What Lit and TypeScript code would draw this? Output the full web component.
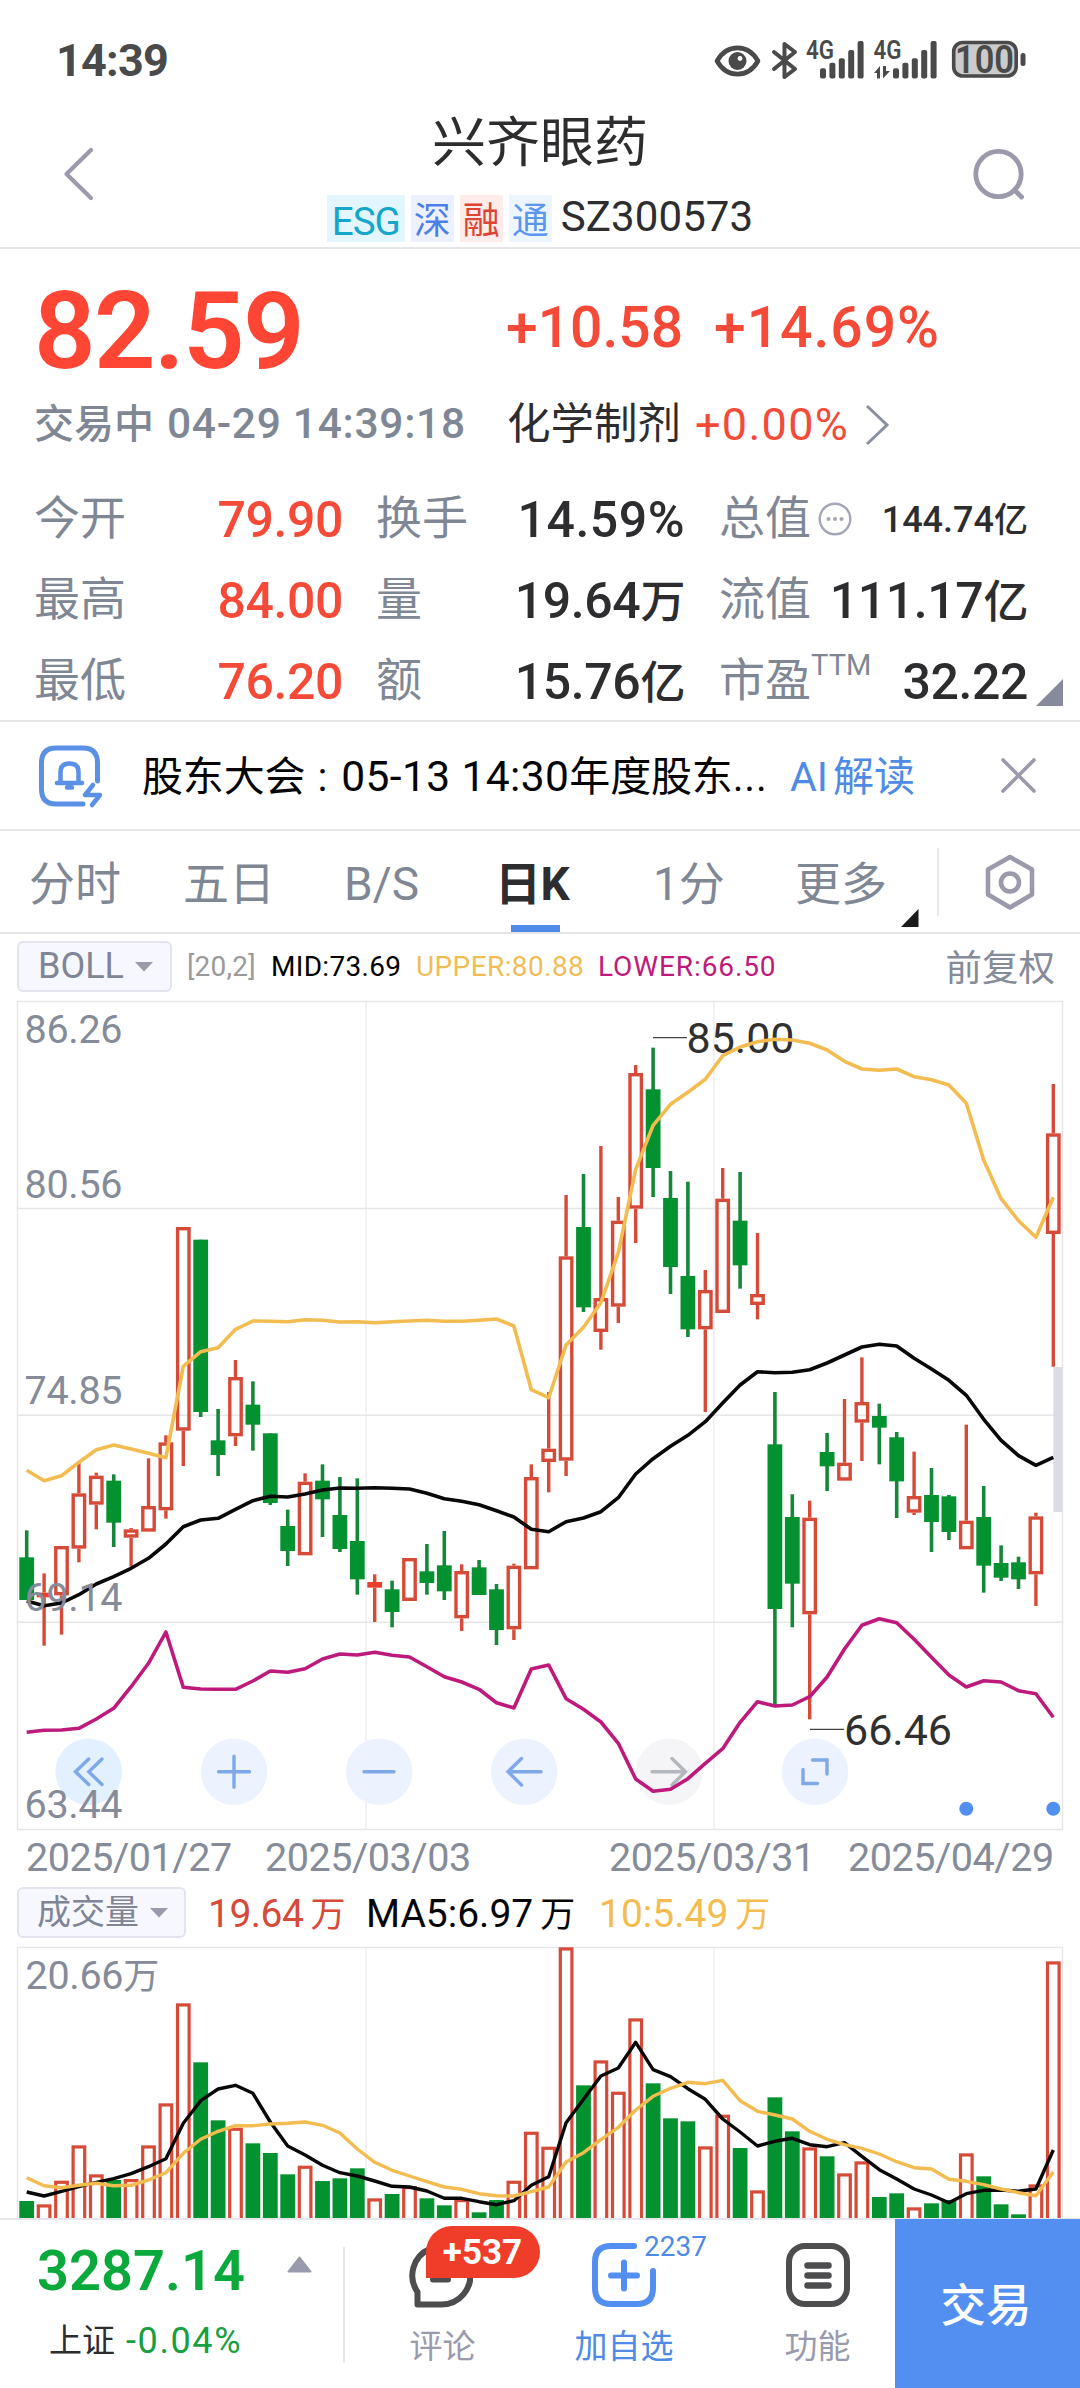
import { LitElement, html, svg, css } from "lit";
import { customElement } from "lit/decorators.js";

type Candle = [up: number, high: number, top: number, bottom: number, low: number];

const STEP = 17.4;
const FIRST_X = 26.7;
const xAt = (i: number) => FIRST_X + STEP * i;

/* Candle and band values are stored in thirds of a pixel below the top of the plot area. */
const CANDLES: Candle[] = [
  [0, 1591, 1672, 1800, 1800], [1, 1720, 1778, 1792, 1937], [1, 1638, 1638, 1786, 1904], [1, 1388, 1480, 1646, 1687],
  [1, 1418, 1427, 1514, 1588], [0, 1423, 1442, 1568, 1641], [1, 1584, 1588, 1613, 1700], [1, 1375, 1518, 1595, 1595],
  [1, 1306, 1327, 1531, 1556], [1, 681, 681, 1292, 1398], [0, 719, 719, 1236, 1251], [0, 1227, 1321, 1365, 1428],
  [1, 1080, 1131, 1309, 1338], [0, 1144, 1214, 1274, 1352], [0, 1300, 1300, 1509, 1515], [0, 1529, 1578, 1653, 1698],
  [1, 1420, 1445, 1666, 1666], [0, 1393, 1442, 1498, 1611], [0, 1431, 1545, 1647, 1656], [0, 1435, 1623, 1738, 1784],
  [1, 1723, 1746, 1763, 1866], [0, 1742, 1768, 1836, 1882], [1, 1674, 1674, 1803, 1803], [0, 1632, 1714, 1749, 1784],
  [0, 1593, 1696, 1774, 1800], [1, 1693, 1713, 1855, 1893], [0, 1680, 1702, 1785, 1785], [0, 1752, 1768, 1890, 1935],
  [1, 1691, 1697, 1888, 1920], [1, 1393, 1431, 1708, 1708], [1, 1176, 1346, 1386, 1477], [1, 585, 769, 1382, 1428],
  [0, 522, 681, 922, 936], [1, 438, 894, 996, 1049], [1, 591, 662, 920, 969], [1, 195, 219, 626, 729],
  [0, 143, 268, 504, 591], [0, 513, 594, 801, 882], [0, 545, 828, 988, 1011], [1, 810, 870, 988, 1236],
  [1, 504, 596, 939, 939], [0, 516, 662, 796, 866], [1, 699, 882, 915, 958], [0, 1176, 1333, 1827, 2115],
  [0, 1483, 1551, 1751, 1882], [1, 1502, 1553, 1843, 2158], [0, 1299, 1356, 1399, 1473], [1, 1197, 1388, 1442, 1442],
  [1, 1072, 1206, 1268, 1383], [0, 1211, 1248, 1283, 1393], [0, 1296, 1312, 1444, 1554], [1, 1355, 1488, 1538, 1545],
  [0, 1404, 1485, 1566, 1656], [0, 1485, 1489, 1596, 1620], [1, 1274, 1562, 1648, 1648], [0, 1458, 1551, 1697, 1778],
  [0, 1636, 1689, 1733, 1743], [0, 1670, 1687, 1738, 1767], [1, 1538, 1549, 1723, 1818], [1, 252, 400, 702, 1100],
];

const UPPER = [1411, 1442, 1427, 1387, 1349, 1335, 1347, 1360, 1373, 1099, 1055, 1043, 988, 963, 964, 965, 959, 961, 966, 965, 968, 965, 963, 961, 964, 964, 961, 957, 978, 1169, 1193, 1035, 982, 908, 758, 508, 376, 313, 277, 238, 167, 141, 125, 118, 120, 130, 150, 184, 207, 211, 207, 230, 239, 255, 310, 480, 596, 662, 712, 592];
const MID = [1803, 1817, 1809, 1784, 1752, 1730, 1705, 1675, 1632, 1580, 1560, 1555, 1528, 1502, 1489, 1491, 1482, 1470, 1464, 1465, 1463, 1465, 1467, 1480, 1496, 1504, 1514, 1532, 1551, 1588, 1595, 1565, 1554, 1535, 1493, 1422, 1376, 1339, 1306, 1265, 1209, 1155, 1115, 1118, 1117, 1109, 1089, 1065, 1041, 1033, 1038, 1075, 1107, 1141, 1186, 1258, 1321, 1367, 1396, 1372];
const LOWER = [2197, 2191, 2190, 2185, 2157, 2125, 2060, 1990, 1896, 2062, 2067, 2068, 2068, 2043, 2013, 2017, 2006, 1977, 1962, 1965, 1957, 1966, 1971, 2000, 2030, 2046, 2068, 2108, 2124, 2007, 1995, 2096, 2128, 2166, 2230, 2337, 2374, 2368, 2336, 2290, 2246, 2167, 2105, 2118, 2115, 2090, 2031, 1947, 1876, 1856, 1868, 1918, 1972, 2025, 2061, 2042, 2046, 2072, 2081, 2152];

/* Volume tops use the same unit, measured in the lower plot. */
const VOLUME = [1113, 1123, 1052, 946, 1033, 1050, 1047, 946, 820, 520, 697, 871, 893, 940, 969, 1033, 1007, 1053, 1045, 1015, 1105, 1092, 1068, 1105, 1126, 1107, 1147, 1110, 1052, 905, 950, 352, 766, 691, 785, 565, 760, 865, 874, 949, 854, 954, 1081, 802, 904, 952, 979, 1030, 994, 1101, 1090, 1132, 1120, 1110, 970, 1039, 1123, 1153, 1063, 394];
const MA5 = [1086, 1098, 1084, 1070, 1057, 1046, 1031, 1010, 986, 880, 812, 777, 766, 790, 876, 948, 975, 1006, 1028, 1038, 1053, 1069, 1071, 1083, 1105, 1105, 1115, 1124, 1112, 1066, 1040, 878, 808, 738, 714, 637, 719, 740, 776, 808, 867, 906, 948, 934, 925, 944, 950, 938, 979, 1019, 1047, 1077, 1095, 1118, 1091, 1081, 1080, 1084, 1077, 960];
const MA10 = [1043, 1067, 1073, 1066, 1060, 1067, 1066, 1050, 1028, 970, 928, 904, 887, 887, 882, 880, 876, 886, 909, 957, 997, 1021, 1038, 1055, 1071, 1078, 1091, 1097, 1098, 1085, 1071, 996, 968, 929, 892, 840, 799, 775, 757, 761, 751, 812, 844, 855, 867, 904, 928, 944, 955, 972, 995, 1013, 1017, 1048, 1054, 1064, 1077, 1088, 1097, 1026];

const FONT = css`
  :host {
    display: block;
    flex-shrink: 0;
    font-family: Roboto, "Noto Sans CJK SC", sans-serif;
  }
  svg { display: block; }
`;

const linePoints = (v: number[]) => v.map((y, i) => `${xAt(i).toFixed(1)},${(y / 3).toFixed(1)}`).join(" ");

@customElement("price-chart")
class PriceChart extends LitElement {
  static styles = [FONT, css`
    .plot { width: 1080px; height: 831px; }
    .grid { stroke: #f1f1f6; stroke-width: 2; fill: none; }
    .frame { stroke: #e6e6ea; stroke-width: 1.4; fill: none; }
    .up { stroke: #d64a38; fill: none; stroke-width: 3.4; }
    .solid { fill: #e8402c; }
    .down { fill: #04912f; }
    .downwick { stroke: #16873a; stroke-width: 3.6; }
    .band { fill: none; stroke-width: 3.6; stroke-linejoin: round; }
    .y { stroke: #f3bc50; }
    .k { stroke: #080808; }
    .m { stroke: #bd1a7c; }
    .axis { font-size: 39.5px; fill: #858b99; letter-spacing: -0.3px; }
    .mark { font-size: 43px; fill: #303030; }
    .lead { stroke: #444; stroke-width: 1.3; }
    .btn { fill: #edf2ff; }
    .btn.first { fill: #e2f0ff; }
    .btn.off { fill: #f5f5f7; }
    .ico { fill: none; stroke: #7fa8e8; stroke-width: 3.4; stroke-linecap: round; }
    .ico.off { stroke: #b4b7be; }
  `];

  candle([up, high, top, bottom, low]: Candle, i: number) {
    const x = xAt(i), h = high / 3, t = top / 3, b = bottom / 3, l = low / 3;
    if (!up) {
      return svg`<line class="downwick" x1=${x} x2=${x} y1=${h} y2=${l}></line>
        <rect class="down" x=${x - 7.4} y=${t} width="14.8" height=${b - t}></rect>`;
    }
    const flat = b - t < 7;
    return svg`<line class="up" x1=${x} x2=${x} y1=${h} y2=${t}></line>
      <line class="up" x1=${x} x2=${x} y1=${b} y2=${l}></line>
      ${flat
        ? svg`<rect class="solid" x=${x - 7.4} y=${t} width="14.8" height=${b - t}></rect>`
        : svg`<rect class="up" x=${x - 5.7} y=${t + 1.7} width="11.4" height=${b - t - 3.4}></rect>`}`;
  }

  render() {
    const xs = [88.7, 234, 379.3, 524.3, 669.3, 815];
    return html`<svg class="plot" viewBox="0 0 1080 831">
      <path class="grid" d="M366 2V829M714 2V829"></path>
      <path class="frame" d="M18 208.5H1062M18 415.3H1062M18 622.3H1062"></path>
      <rect class="frame" x="17.5" y="1.5" width="1045" height="828"></rect>
      ${xs.map((x, i) => svg`<circle class="btn ${i === 0 ? "first" : i === 4 ? "off" : ""}" cx=${x} cy="771.7" r="33.3"></circle>`)}
      <path class="ico" d="M88.7 759L75.5 771.7L88.7 784.5M102 759L88.8 771.7L102 784.5"></path>
      <path class="ico" d="M218.5 771.7H249.5M234 756.2V787.2"></path>
      <path class="ico" d="M364 771.7H394"></path>
      <path class="ico" d="M541 771.7H508M521.5 758.5L508 771.7L521.5 785"></path>
      <path class="ico off" d="M652 771.7H685M672 758.5L685.5 771.7L672 785"></path>
      <path class="ico" d="M812.5 760H827V774M803 769.5V783.5H817.5"></path>
      <rect x="1053.3" y="367" width="9.4" height="145" fill="#dcdde4"></rect>
      ${CANDLES.map((c, i) => this.candle(c, i))}
      <path class="lead" d="M653 37.7H687M810 729.3H844"></path>
      <text class="mark" x="686.5" y="52.500">85.00</text>
      <text class="mark" x="844" y="745">66.46</text>
      <polyline class="band k" points=${linePoints(MID)}></polyline>
      <polyline class="band y" points=${linePoints(UPPER)}></polyline>
      <polyline class="band m" points=${linePoints(LOWER)}></polyline>
      <g class="axis">
        <text x="24.5" y="43">86.26</text>
        <text x="24.5" y="198">80.56</text>
        <text x="24.5" y="404">74.85</text>
        <text x="24.5" y="611">69.14</text>
        <text x="24.5" y="818">63.44</text>
      </g>
      <circle cx="966.3" cy="808.8" r="7" fill="#528ff0"></circle>
      <circle cx="1053.3" cy="808.8" r="7" fill="#528ff0"></circle>
    </svg>`;
  }
}

@customElement("volume-chart")
class VolumeChart extends LitElement {
  static styles = [FONT, css`
    .plot { width: 1080px; height: 273px; }
    .grid { stroke: #f1f1f6; stroke-width: 2; }
    .frame { stroke: #e6e6ea; stroke-width: 1.4; fill: none; }
    .up { stroke: #d64a38; fill: none; stroke-width: 3.2; }
    .down { fill: #04912f; }
    .line { fill: none; stroke-width: 3.4; stroke-linejoin: round; }
    .k { stroke: #080808; }
    .y { stroke: #f3bc50; }
    .axis { font-size: 39.5px; fill: #858b99; letter-spacing: -0.3px; }
    .unit { font-size: 36px; }
  `];

  render() {
    return html`<svg class="plot" viewBox="0 115 1080 273">
      <path class="grid" d="M366 118V389M714 118V389"></path>
      <path class="frame" d="M17.5 389V117.5H1062.5V389"></path>
      <text class="axis" x="25.5" y="159">20.66<tspan class="unit">万</tspan></text>
      ${VOLUME.map((v, i) => {
        const x = xAt(i), y = v / 3;
        return CANDLES[i][0]
          ? svg`<rect class="up" x=${x - 5.8} y=${y + 1.6} width="11.6" height=${400 - y}></rect>`
          : svg`<rect class="down" x=${x - 7.4} y=${y} width="14.8" height=${400 - y}></rect>`;
      })}
      <polyline class="line k" points=${linePoints(MA5)}></polyline>
      <polyline class="line y" points=${linePoints(MA10)}></polyline>
    </svg>`;
  }
}

@customElement("status-bar")
class StatusBar extends LitElement {
  static styles = [FONT, css`
    .bar { display: flex; justify-content: space-between; height: 96px; padding: 0 50px 0 56px; box-sizing: border-box; color: #4a4a4a; }
    .time { font-size: 45px; font-weight: 700; line-height: 121px; letter-spacing: -0.8px; }
    .icons { width: 320px; height: 96px; }
    .net { font-size: 25px; font-weight: 600; }
    .batt { font-size: 38px; font-weight: 600; }
  `];

  bars(x0: number) {
    return [68.3, 62.7, 58.3, 50, 41].map((t, i) => svg`<rect x=${x0 + i * 9.4} y=${t} width="6" height=${78.5 - t} rx="2"></rect>`);
  }

  render() {
    return html`<div class="bar">
      <div class="time">14:39</div>
      <svg class="icons" viewBox="710 0 320 96" fill="#4a4a4a">
        <path d="M717 61C727 43.500 748 43.500 758 61C748 78.500 727 78.500 717 61Z" fill="none" stroke="#4a4a4a" stroke-width="4.6" stroke-linejoin="round"></path>
        <circle cx="737.5" cy="61" r="9"></circle>
        <circle cx="740" cy="58.5" r="2.4" fill="#fff"></circle>
        <path d="M774 52L795 69L784.500 77V44L795 52L774 69" fill="none" stroke="#4a4a4a" stroke-width="4" stroke-linejoin="round" stroke-linecap="round"></path>
        <text class="net" x="806" y="59" textLength="28" lengthAdjust="spacingAndGlyphs">4G</text>
        ${this.bars(820)}
        <text class="net" x="873.500" y="59" textLength="28" lengthAdjust="spacingAndGlyphs">4G</text>
        ${this.bars(893)}
        <path d="M874 73L880 66V78.500H877V73ZM883 66H886V71H890L883 78.500Z"></path>
        <rect x="953.700" y="42.500" width="62.500" height="33.500" rx="9" fill="#cbcbcb" stroke="#4a4a4a" stroke-width="3.6"></rect>
        <rect x="1020.500" y="53" width="5" height="13" rx="2.500"></rect>
        <text class="batt" x="955" y="73" textLength="59" lengthAdjust="spacingAndGlyphs">100</text>
      </svg>
    </div>`;
  }
}

@customElement("app-root")
class AppRoot extends LitElement {
  static styles = [FONT, css`
    :host { width: 1080px; height: 2388px; overflow: hidden; background: #fff; color: #2d2d2f; }
    .page { display: flex; flex-direction: column; height: 2388px; }
    .page > div { flex-shrink: 0; }

    .header { display: grid; grid-template-columns: 250px 1fr 250px; height: 153px; box-sizing: border-box; border-bottom: 2px solid #e6e6e9; }
    .back { margin: 51px 0 0 60px; }
    .search { margin: 50px 0 0 140px; }
    .names { display: flex; flex-direction: column; align-items: center; }
    .title { font-size: 54px; line-height: 60px; margin-top: 18px; }
    .tags { display: flex; align-items: center; margin-top: 21px; white-space: nowrap; }
    .tag { height: 47px; line-height: 54px; margin-right: 6px; font-size: 37px; width: 43px; text-align: center; }
    .esg { width: 78px; background: #e3f6ff; color: #14a7c9; font-size: 38.5px; letter-spacing: -1px; }
    .shen { background: #edf0fe; color: #4b80e6; }
    .rong { background: #feecea; color: #dc4535; }
    .tong { background: #edf6ff; color: #5c97ee; }
    .code { font-size: 42px; line-height: 44px; margin: -3px 0 0 3px; letter-spacing: 0.1px; }

    .quote { height: 473px; box-sizing: border-box; padding: 42px 0 0 35px; border-bottom: 2px solid #e6e6e9; }
    .red { color: #f54a38; }
    .price-row { display: grid; grid-template-columns: 471px 208px 1fr; height: 80px; align-items: center; font-weight: 500; }
    .price { font-size: 108px; line-height: 80px; font-weight: 600; color: #ff4635; letter-spacing: -1.7px; margin-left: -1px; }
    .change { font-size: 57px; line-height: 74px; padding-bottom: 6px; }
    .rate { letter-spacing: 1px; }
    .state-row { display: grid; grid-template-columns: 472px 188px 1fr; height: 60px; margin-top: 22px; align-items: center; line-height: 62px; white-space: nowrap; }
    .state { font-size: 40px; font-weight: 500; color: #7f8795; display: flex; gap: 13px; margin-left: -1px; }
    .cn { line-height: 64px; }
    .clock { font-size: 42.5px; letter-spacing: 0.7px; }
    .industry { font-size: 43.5px; }
    .pct { display: flex; align-items: center; gap: 14px; font-size: 45px; letter-spacing: 1.3px; }
    .stats { display: grid; grid-template-columns: 184px 124px 34px 154px 154px 35px 125px 183px; grid-auto-rows: 81px; margin-top: 23px; position: relative; white-space: nowrap; }
    .lab { font-size: 46px; color: #7f8795; display: flex; line-height: 85px; height: 81px; margin-left: -1px; }
    .val { font-size: 50px; font-weight: 500; text-align: right; line-height: 88px; height: 81px; justify-self: end; }
    .num { letter-spacing: -0.4px; }
    .turn { letter-spacing: 0.5px; }
    .small { font-size: 36px; }
    .cjk { font-size: 45px; }
    .small .cjk { font-size: 34px; }
    .ttm { font-size: 29px; line-height: 54px; letter-spacing: 0.1px; }
    .g1 { grid-column: 1; } .v1 { grid-column: 2; } .g2 { grid-column: 4; } .v2 { grid-column: 5; } .g3 { grid-column: 7; } .v3 { grid-column: 8; }
    .more { flex: none; margin: 23px 0 0 4px; }
    .corner { position: absolute; left: 1001px; top: 203px; }

    .notice { display: grid; grid-template-columns: 142px 648px 211px 79px; height: 109px; box-sizing: border-box; border-bottom: 2px solid #e6e6e9; align-items: center; line-height: 110px; white-space: nowrap; }
    .notice > * { max-height: 107px; }
    .bell { margin: 0 0 0 37px; }
    .msg { font-size: 41px; color: #050505; letter-spacing: -0.15px; }
    .colon { margin: 0 4px 0 2px; }
    .time2 { font-size: 42.5px; letter-spacing: 0.4px; }
    .dots { letter-spacing: 0.8px; }
    .ai { font-size: 41px; color: #4f8ae4; display: flex; gap: 5px; }

    .tabs { display: grid; grid-template-columns: 183px 161px 154px 155px 142px 142px 1fr; height: 103px; box-sizing: border-box; border-bottom: 2px solid #e6e6e9; font-size: 46px; line-height: 106px; color: #7f8795; white-space: nowrap; }
    .tab1 { padding-left: 29px; }
    .active { color: #2d2d2f; font-weight: 700; position: relative; letter-spacing: -0.5px; margin-left: -3px; }
    .active::after { content: ""; position: absolute; left: 16px; top: 94px; width: 49px; height: 7px; background: #4f8ae8; }
    .moretab { position: relative; }
    .moretab svg { position: absolute; left: 106px; top: 78px; }
    .set { display: flex; border-left: 2px solid #e8e8ef; height: 68px; margin-top: 17px; }
    .set svg { margin: 4px 0 0 44px; }

    .ind { display: grid; grid-template-columns: 155px 84px 145px 182px 1fr 142px; padding-left: 17px; height: 66px; box-sizing: border-box; padding-top: 7px; font-size: 28px; line-height: 52px; white-space: nowrap; }
    .pill { display: flex; align-items: center; box-sizing: border-box; height: 51px; border: 2px solid #e4e4f1; border-radius: 6px; background: #f6f7ff; color: #7f8594; line-height: 49px; }
    .boll { font-size: 36px; width: 155px; padding-left: 19px; gap: 11px; }
    .vol { font-size: 34px; width: 169px; padding-left: 18px; gap: 11px; }
    .params { color: #9a9a9a; padding-left: 15px; letter-spacing: 0.2px; }
    .midv { color: #000; padding-left: 15px; letter-spacing: 0.3px; }
    .upv { color: #f0bd55; padding-left: 15px; letter-spacing: 0.4px; }
    .lowv { color: #bd1a7c; padding-left: 15px; letter-spacing: 0.9px; }
    .adj { font-size: 36.5px; color: #858b99; text-align: right; padding-right: 25px; line-height: 55px; }

    .dates { display: grid; grid-template-columns: 239px 344px 239px 1fr; padding-left: 26px; height: 56px; font-size: 39.5px; line-height: 53px; color: #858b99; letter-spacing: -0.45px; }
    .volhead { display: grid; grid-template-columns: 191px 158px 233px 1fr; padding-left: 17px; height: 58px; font-size: 39px; line-height: 54px; white-space: nowrap; }
    .volhead .w { font-size: 35px; margin-left: 7px; }
    .vr { color: #d64a38; letter-spacing: -0.5px; }
    .vb { color: #050505; }
    .vy { color: #f3bc50; }

    .bottom { display: grid; grid-template-columns: 345px 195px 168px 187px 185px; height: 170px; box-sizing: border-box; border-top: 2px solid #e8e8ec; background: #fff; }
    .index { position: relative; border-right: 2px solid #e6e6ee; height: 116px; margin-top: 27px; box-sizing: border-box; }
    .idx-top { display: flex; align-items: flex-start; gap: 42px; padding-left: 37px; font-size: 56px; font-weight: 600; color: #0aa93c; line-height: 48px; height: 66px; }
    .idx-top svg { margin-top: 9px; }
    .idx-sub { display: flex; gap: 11px; padding-left: 49px; font-size: 33px; line-height: 56px; }
    .green { color: #17a03f; font-size: 36px; letter-spacing: 1.6px; }
    .item { position: relative; display: flex; flex-direction: column; align-items: center; padding-top: 22px; font-size: 33px; color: #9a9aad; }
    .item .t { line-height: 36px; margin-top: 21px; }
    .item.blue { color: #4f8ae4; }
    .item.fn { padding-left: 32px; }
    .bubble { margin-left: -6px; }
    .badge { position: absolute; left: 80.500px; top: 6px; width: 114px; height: 52px; border-radius: 26px 26px 26px 0; background: #f03d2a; color: #fff; font-weight: 700; font-size: 35px; line-height: 53px; text-align: center; z-index: 1; }
    .count { position: absolute; left: 104px; top: 10px; font-size: 28px; line-height: 34px; }
    .trade { background: #528ff0; color: #fff; font-size: 45.500px; font-weight: 500; line-height: 175px; height: 170px; text-align: center; margin-top: -1px; padding-right: 3px; }
  `];

  caret() {
    return html`<svg width="18" height="10" viewBox="0 0 18 10"><path d="M0 0H18L9 9.500Z" fill="#9a9aad"></path></svg>`;
  }

  render() {
    return html`<div class="page">
      <status-bar></status-bar>
      <div class="header">
        <svg class="back" width="36" height="54" viewBox="0 0 36 54"><path d="M31 3L6.500 27L31 51" fill="none" stroke="#9a9aac" stroke-width="4.2" stroke-linecap="round" stroke-linejoin="round"></path></svg>
        <div class="names">
          <div class="title">兴齐眼药</div>
          <div class="tags">
            <span class="tag esg">ESG</span><span class="tag shen">深</span><span class="tag rong">融</span><span class="tag tong">通</span>
            <span class="code">SZ300573</span>
          </div>
        </div>
        <svg class="search" width="60" height="60" viewBox="970 146 60 60"><circle cx="998.500" cy="174" r="22.700" fill="none" stroke="#9a9aac" stroke-width="4.8"></circle><path d="M1014.500 190L1021.500 197" stroke="#9a9aac" stroke-width="4.8" stroke-linecap="round"></path></svg>
      </div>

      <div class="quote">
        <div class="price-row">
          <div class="price">82.59</div>
          <div class="change red">+10.58</div>
          <div class="change rate red">+14.69%</div>
        </div>
        <div class="state-row">
          <div class="state"><span class="cn">交易中</span><span class="clock">04-29 14:39:18</span></div>
          <div class="industry">化学制剂</div>
          <div class="pct red">+0.00%<svg width="28" height="44" viewBox="0 0 28 44"><path d="M4 3L24 22L4 41" fill="none" stroke="#8b90a0" stroke-width="3"></path></svg></div>
        </div>
        <div class="stats">
          <div class="lab g1">今开</div><div class="val v1 red num">79.90</div>
          <div class="lab g2">换手</div><div class="val v2 turn">14.59%</div>
          <div class="lab g3">总值<svg class="more" width="38" height="38" viewBox="0 0 38 38"><circle cx="20" cy="20" r="15.300" fill="none" stroke="#a3a6b6" stroke-width="2.400"></circle><g fill="#a3a6b6"><circle cx="13.500" cy="20" r="2"></circle><circle cx="20" cy="20" r="2"></circle><circle cx="26.500" cy="20" r="2"></circle></g></svg></div>
          <div class="val v3 small">144.74<span class="cjk">亿</span></div>

          <div class="lab g1">最高</div><div class="val v1 red num">84.00</div>
          <div class="lab g2">量</div><div class="val v2 num">19.64<span class="cjk">万</span></div>
          <div class="lab g3">流值</div><div class="val v3 num">111.17<span class="cjk">亿</span></div>

          <div class="lab g1">最低</div><div class="val v1 red num">76.20</div>
          <div class="lab g2">额</div><div class="val v2 num">15.76<span class="cjk">亿</span></div>
          <div class="lab g3">市盈<span class="ttm">TTM</span></div><div class="val v3 num">32.22</div>
          <svg class="corner" width="27" height="27" viewBox="0 0 27 27"><path d="M27 0V27H0Z" fill="#878a9a"></path></svg>
        </div>
      </div>

      <div class="notice">
        <svg class="bell" width="68" height="66" viewBox="37 743 68 66" fill="none" stroke="#5a90e6" stroke-width="5" stroke-linecap="round" stroke-linejoin="round">
          <path d="M83 804H56Q41.500 804 41.500 789V763Q41.500 748 56 748H83Q97.500 748 97.500 763V781"></path>
          <path d="M57 783H82M60.500 782V772Q60.500 763.500 69.500 763.500Q78.500 763.500 78.500 772V782M67 787.500H72" stroke-width="4.500"></path>
          <path d="M93 785L85 795H100L92 805" stroke-width="4.500"></path>
        </svg>
        <div class="msg">股东大会 <span class="colon">:</span> <span class="time2">05-13 14:30</span>年度股东<span class="dots">...</span></div>
        <div class="ai"><span>AI</span><span>解读</span></div>
        <svg width="36" height="36" viewBox="0 0 36 36"><path d="M2 2L33 33M33 2L2 33" stroke="#9a9aac" stroke-width="3.600" stroke-linecap="round"></path></svg>
      </div>

      <div class="tabs">
        <div class="tab1">分时</div><div>五日</div><div>B/S</div><div class="active">日K</div><div>1分</div>
        <div class="moretab">更多<svg width="18" height="18" viewBox="0 0 18 18"><path d="M17.500 0V18H0Z" fill="#1b1b1b"></path></svg></div>
        <div class="set"><svg width="54" height="60" viewBox="0 0 54 60" fill="none" stroke="#9a9aac" stroke-width="4.600"><path d="M27 5L49 17.500V42.500L27 55.500L5 42.500V17.500Z" stroke-linejoin="round"></path><circle cx="27" cy="30.500" r="9"></circle></svg></div>
      </div>

      <div class="ind">
        <div class="pill boll">BOLL${this.caret()}</div>
        <div class="params">[20,2]</div><div class="midv">MID:73.69</div><div class="upv">UPPER:80.88</div><div class="lowv">LOWER:66.50</div>
        <div class="adj">前复权</div>
      </div>
      <price-chart></price-chart>
      <div class="dates"><span>2025/01/27</span><span>2025/03/03</span><span>2025/03/31</span><span>2025/04/29</span></div>
      <div class="volhead">
        <div class="pill vol">成交量${this.caret()}</div>
        <div class="vr">19.64<span class="w">万</span></div>
        <div class="vb">MA5:6.97<span class="w">万</span></div>
        <div class="vy">10:5.49<span class="w">万</span></div>
      </div>
      <volume-chart></volume-chart>

      <div class="bottom">
        <div class="index">
          <div class="idx-top">3287.14<svg width="25" height="17" viewBox="0 0 25 17"><path d="M12.500 1.500L23.500 15.500H1.500Z" fill="#9a9aad" stroke="#9a9aad" stroke-width="2" stroke-linejoin="round"></path></svg></div>
          <div class="idx-sub"><span>上证</span><span class="green">-0.04%</span></div>
        </div>
        <div class="item">
          <svg class="bubble" width="66" height="66" viewBox="0 0 66 66" fill="none" stroke="#4d4d4f" stroke-width="6" stroke-linecap="round"><path d="M10.500 62.500V50A29 29 0 1 1 34 62.500Z" stroke-linejoin="round"></path><path d="M22 26H43M26 37.500H41"></path></svg>
          <span class="badge">+537</span>
          <div class="t">评论</div>
        </div>
        <div class="item blue">
          <svg width="66" height="66" viewBox="0 0 66 66" fill="none" stroke="#528ff0" stroke-width="6" stroke-linecap="round"><path d="M43 4H20Q4 4 4 20V46Q4 62 20 62H46Q62 62 62 46V29"></path><path d="M20 33.500H46M33 20.500V46.500"></path></svg>
          <span class="count">2237</span>
          <div class="t">加自选</div>
        </div>
        <div class="item fn">
          <svg width="66" height="66" viewBox="0 0 66 66" fill="none" stroke="#4d4d4f" stroke-width="6" stroke-linecap="round"><rect x="4" y="4" width="58" height="58" rx="16"></rect><path d="M22.500 23.500H43.500M22.500 33.500H43.500M22.500 43.500H43.500" stroke-width="6.500"></path></svg>
          <div class="t">功能</div>
        </div>
        <div class="trade">交易</div>
      </div>
    </div>`;
  }
}
